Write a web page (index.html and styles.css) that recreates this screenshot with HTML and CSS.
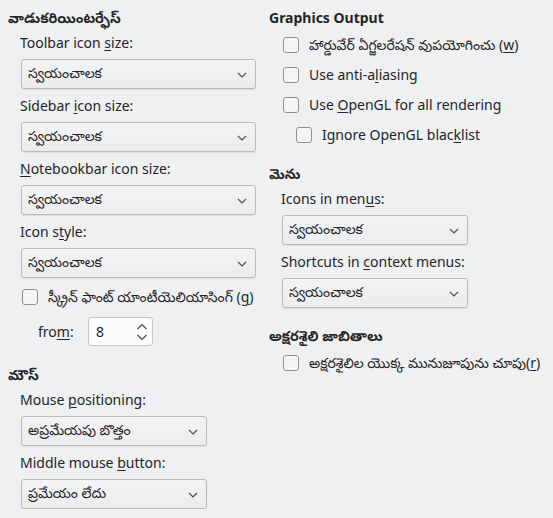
FILE: index.html
```html
<!DOCTYPE html>
<html>
<head>
<meta charset="utf-8">
<link rel="stylesheet" href="styles.css">
</head>
<body>
<div class="page">
  <div class="col col-left">
    <div class="heading">వాడుకరియింటర్ఫేస్</div>
    <div class="group">
      <div class="label">Toolbar icon <u>s</u>ize:</div>
      <div class="combo wide"><span>స్వయంచాలక</span><svg class="chev" width="10" height="6" viewBox="0 0 10 6"><path d="M1 1 L5 5 L9 1" fill="none" stroke="#4d4f51" stroke-width="1.2"/></svg></div>
      <div class="label">Sidebar <u>i</u>con size:</div>
      <div class="combo wide"><span>స్వయంచాలక</span><svg class="chev" width="10" height="6" viewBox="0 0 10 6"><path d="M1 1 L5 5 L9 1" fill="none" stroke="#4d4f51" stroke-width="1.2"/></svg></div>
      <div class="label"><u>N</u>otebookbar icon size:</div>
      <div class="combo wide"><span>స్వయంచాలక</span><svg class="chev" width="10" height="6" viewBox="0 0 10 6"><path d="M1 1 L5 5 L9 1" fill="none" stroke="#4d4f51" stroke-width="1.2"/></svg></div>
      <div class="label">Icon s<u>t</u>yle:</div>
      <div class="combo wide"><span>స్వయంచాలక</span><svg class="chev" width="10" height="6" viewBox="0 0 10 6"><path d="M1 1 L5 5 L9 1" fill="none" stroke="#4d4f51" stroke-width="1.2"/></svg></div>
      <div class="check aa"><span class="box"></span><span>స్క్రీన్ ఫాంట్ యాంటీయెలియాసింగ్ (<u>g</u>)</span></div>
      <div class="from-row">
        <span class="from-label">fro<u>m</u>:</span>
        <div class="spin"><span>8</span>
          <svg class="spin-arrows" width="12" height="18" viewBox="0 0 12 18"><path d="M1.5 6 L6 1.5 L10.5 6" fill="none" stroke="#4d4f51" stroke-width="1.2"/><path d="M1.5 12 L6 16.5 L10.5 12" fill="none" stroke="#4d4f51" stroke-width="1.2"/></svg>
        </div>
      </div>
    </div>
    <div class="heading h-mouse">మౌస్</div>
    <div class="group">
      <div class="label">Mouse <u>p</u>ositioning:</div>
      <div class="combo narrow"><span>అప్రమేయపు బొత్తం</span><svg class="chev" width="10" height="6" viewBox="0 0 10 6"><path d="M1 1 L5 5 L9 1" fill="none" stroke="#4d4f51" stroke-width="1.2"/></svg></div>
      <div class="label">Middle mouse <u>b</u>utton:</div>
      <div class="combo narrow"><span>ప్రమేయం లేదు</span><svg class="chev" width="10" height="6" viewBox="0 0 10 6"><path d="M1 1 L5 5 L9 1" fill="none" stroke="#4d4f51" stroke-width="1.2"/></svg></div>
    </div>
  </div>
  <div class="col col-right">
    <div class="heading">Graphics Output</div>
    <div class="group">
      <div class="check first"><span class="box"></span><span>హార్డువేర్ ఏగ్జలరేషన్ వుపయోగించు (<u>w</u>)</span></div>
      <div class="check"><span class="box"></span><span>Use anti-a<u>l</u>iasing</span></div>
      <div class="check"><span class="box"></span><span>Use <u>O</u>penGL for all rendering</span></div>
      <div class="check sub"><span class="box"></span><span>Ignore OpenGL blac<u>k</u>list</span></div>
    </div>
    <div class="heading h-menu">మెను</div>
    <div class="group">
      <div class="label">Icons in men<u>u</u>s:</div>
      <div class="combo narrow"><span>స్వయంచాలక</span><svg class="chev" width="10" height="6" viewBox="0 0 10 6"><path d="M1 1 L5 5 L9 1" fill="none" stroke="#4d4f51" stroke-width="1.2"/></svg></div>
      <div class="label">Shortcuts in <u>c</u>ontext menus:</div>
      <div class="combo narrow"><span>స్వయంచాలక</span><svg class="chev" width="10" height="6" viewBox="0 0 10 6"><path d="M1 1 L5 5 L9 1" fill="none" stroke="#4d4f51" stroke-width="1.2"/></svg></div>
    </div>
    <div class="heading h-font">అక్షరశైలి జాబితాలు</div>
    <div class="group">
      <div class="check first"><span class="box"></span><span>అక్షరశైలిల యొక్క మునుజూపును చూపు(<u>r</u>)</span></div>
    </div>
  </div>
</div>
</body>
</html>
```

FILE: styles.css
```css
html, body {
  margin: 0;
  padding: 0;
  background: #eff0f1;
}
body {
  font-family: "Noto Sans", "Noto Sans Telugu", "Lohit Telugu", sans-serif;
  font-size: 14px;
  color: #232627;
}
u {
  text-decoration-thickness: 1px;
  text-underline-offset: 2px;
}
.page {
  display: grid;
  grid-template-columns: 261px 1fr;
  padding: 8px 0 0 8px;
}
.col {
  display: flex;
  flex-direction: column;
}
.heading {
  font-weight: bold;
  height: 20px;
  line-height: 20px;
}
.group {
  display: flex;
  flex-direction: column;
  align-items: flex-start;
  padding-left: 12px;
}
.label {
  height: 20px;
  line-height: 20px;
  margin-top: 5px;
}
.label + .combo { margin-top: 6px; }
.combo {
  box-sizing: border-box;
  height: 30px;
  margin-left: 1px;
  border: 1px solid #b8babc;
  border-radius: 3px;
  background: linear-gradient(#f3f4f5, #ebeced);
  box-shadow: 0 1px 1px rgba(0,0,0,0.08);
  display: flex;
  align-items: center;
  justify-content: space-between;
  padding: 0 8px 0 6px;
}
.combo + .label { margin-top: 7px; }
.combo.wide { width: 235px; }
.combo.narrow { width: 186px; }
.chev { margin-top: 1px; }
.check {
  display: flex;
  align-items: center;
  height: 20px;
  line-height: 20px;
  margin-top: 10px;
  margin-left: 2px;
}
.check.first { margin-top: 7px; }
.check.aa { margin-top: 9px; }
.check.sub { margin-left: 15px; }
.box {
  box-sizing: border-box;
  width: 16px;
  height: 16px;
  border: 1px solid #8e9092;
  border-radius: 3px;
  background: #f4f5f5;
  margin-right: 10px;
  flex: none;
}
.from-row {
  display: flex;
  align-items: center;
  margin-top: 10px;
  padding-left: 18px;
}
.from-label {
  width: 50px;
}
.spin {
  box-sizing: border-box;
  width: 65px;
  height: 29px;
  background: #fcfcfc;
  border: 1px solid #c4c6c8;
  border-radius: 3px;
  display: flex;
  align-items: center;
  justify-content: space-between;
  padding: 0 4px 0 7px;
}
.h-mouse { margin-top: 19px; }
.h-menu { margin-top: 19px; }
.h-font { margin-top: 18px; }
```
